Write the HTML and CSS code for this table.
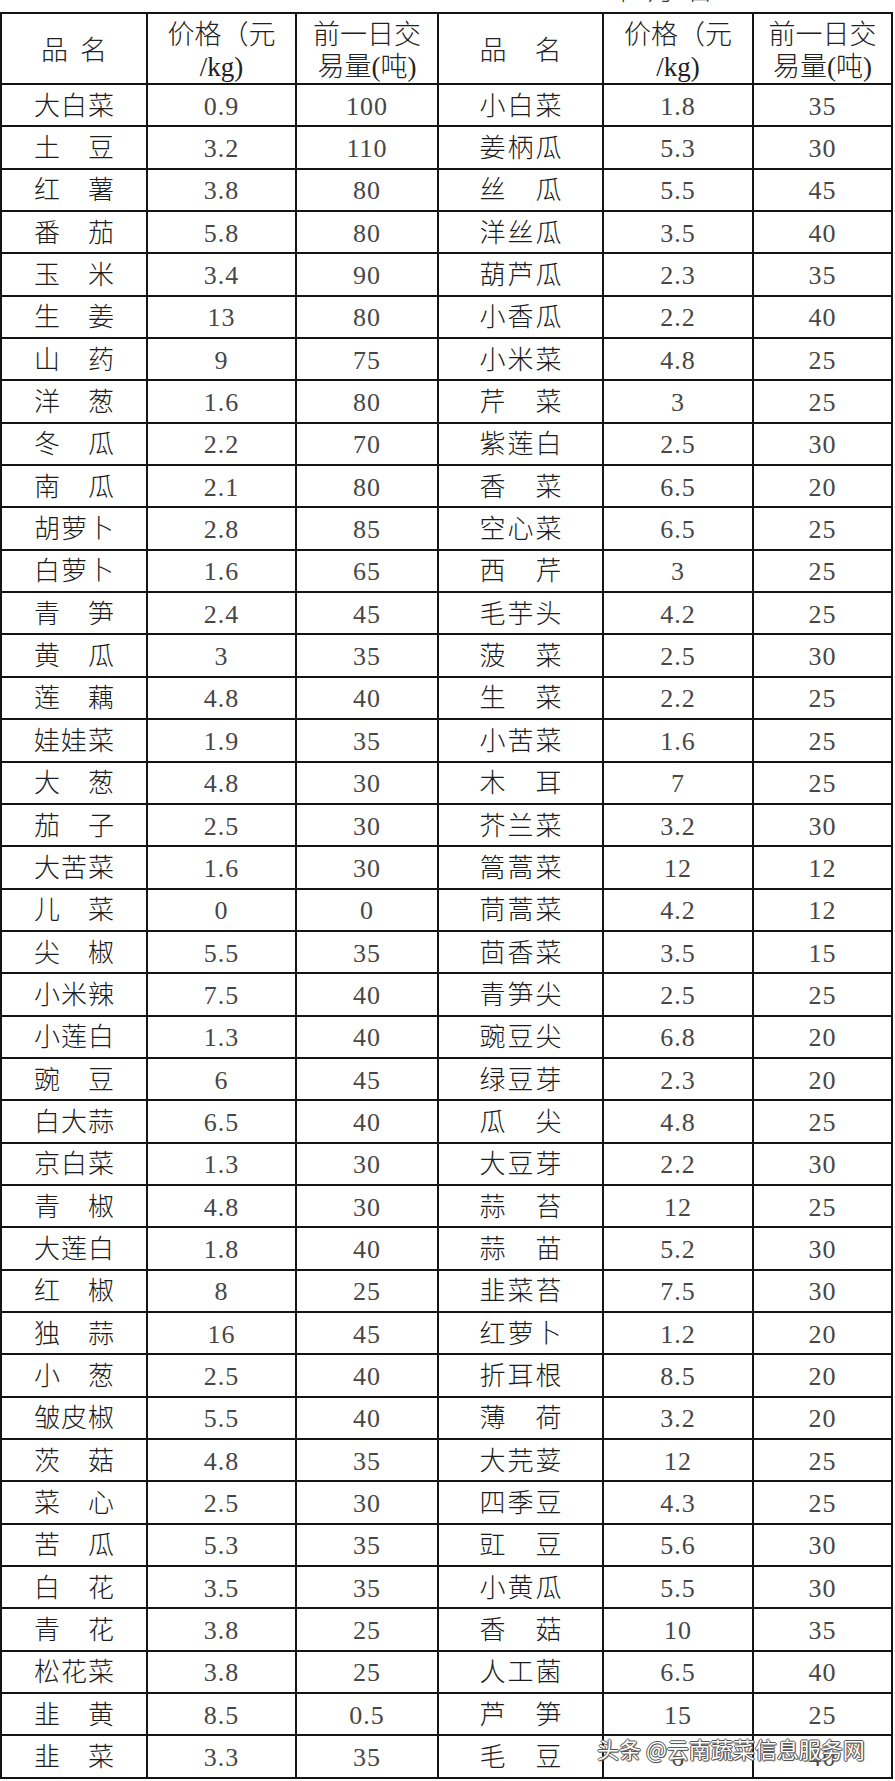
FILE: index.html
```html
<!DOCTYPE html>
<html lang="zh-CN">
<head>
<meta charset="utf-8">
<title>蔬菜价格表</title>
<link rel="stylesheet" href="styles.css">
</head>
<body>
<div class="page">
  <div class="date-strip"><span class="date">2023年6月5日</span></div>
  <div class="sheet">
    <div class="c h"><span class="nm hl"><i>品</i><i>名</i></span></div>
    <div class="c h">价格（元<br>/kg)</div>
    <div class="c h">前一日交<br>易量(吨)</div>
    <div class="c h"><span class="nm hr"><i>品</i><i>名</i></span></div>
    <div class="c h">价格（元<br>/kg)</div>
    <div class="c h">前一日交<br>易量(吨)</div>

    <div class="c"><span class="nm"><i>大</i><i>白</i><i>菜</i></span></div><div class="c n">0.9</div><div class="c n">100</div>
    <div class="c"><span class="nm r"><i>小</i><i>白</i><i>菜</i></span></div><div class="c n">1.8</div><div class="c n">35</div>

    <div class="c"><span class="nm"><i>土</i><i>豆</i></span></div><div class="c n">3.2</div><div class="c n">110</div>
    <div class="c"><span class="nm r"><i>姜</i><i>柄</i><i>瓜</i></span></div><div class="c n">5.3</div><div class="c n">30</div>

    <div class="c"><span class="nm"><i>红</i><i>薯</i></span></div><div class="c n">3.8</div><div class="c n">80</div>
    <div class="c"><span class="nm r"><i>丝</i><i>瓜</i></span></div><div class="c n">5.5</div><div class="c n">45</div>

    <div class="c"><span class="nm"><i>番</i><i>茄</i></span></div><div class="c n">5.8</div><div class="c n">80</div>
    <div class="c"><span class="nm r"><i>洋</i><i>丝</i><i>瓜</i></span></div><div class="c n">3.5</div><div class="c n">40</div>

    <div class="c"><span class="nm"><i>玉</i><i>米</i></span></div><div class="c n">3.4</div><div class="c n">90</div>
    <div class="c"><span class="nm r"><i>葫</i><i>芦</i><i>瓜</i></span></div><div class="c n">2.3</div><div class="c n">35</div>

    <div class="c"><span class="nm"><i>生</i><i>姜</i></span></div><div class="c n">13</div><div class="c n">80</div>
    <div class="c"><span class="nm r"><i>小</i><i>香</i><i>瓜</i></span></div><div class="c n">2.2</div><div class="c n">40</div>

    <div class="c"><span class="nm"><i>山</i><i>药</i></span></div><div class="c n">9</div><div class="c n">75</div>
    <div class="c"><span class="nm r"><i>小</i><i>米</i><i>菜</i></span></div><div class="c n">4.8</div><div class="c n">25</div>

    <div class="c"><span class="nm"><i>洋</i><i>葱</i></span></div><div class="c n">1.6</div><div class="c n">80</div>
    <div class="c"><span class="nm r"><i>芹</i><i>菜</i></span></div><div class="c n">3</div><div class="c n">25</div>

    <div class="c"><span class="nm"><i>冬</i><i>瓜</i></span></div><div class="c n">2.2</div><div class="c n">70</div>
    <div class="c"><span class="nm r"><i>紫</i><i>莲</i><i>白</i></span></div><div class="c n">2.5</div><div class="c n">30</div>

    <div class="c"><span class="nm"><i>南</i><i>瓜</i></span></div><div class="c n">2.1</div><div class="c n">80</div>
    <div class="c"><span class="nm r"><i>香</i><i>菜</i></span></div><div class="c n">6.5</div><div class="c n">20</div>

    <div class="c"><span class="nm"><i>胡</i><i>萝</i><i>卜</i></span></div><div class="c n">2.8</div><div class="c n">85</div>
    <div class="c"><span class="nm r"><i>空</i><i>心</i><i>菜</i></span></div><div class="c n">6.5</div><div class="c n">25</div>

    <div class="c"><span class="nm"><i>白</i><i>萝</i><i>卜</i></span></div><div class="c n">1.6</div><div class="c n">65</div>
    <div class="c"><span class="nm r"><i>西</i><i>芹</i></span></div><div class="c n">3</div><div class="c n">25</div>

    <div class="c"><span class="nm"><i>青</i><i>笋</i></span></div><div class="c n">2.4</div><div class="c n">45</div>
    <div class="c"><span class="nm r"><i>毛</i><i>芋</i><i>头</i></span></div><div class="c n">4.2</div><div class="c n">25</div>

    <div class="c"><span class="nm"><i>黄</i><i>瓜</i></span></div><div class="c n">3</div><div class="c n">35</div>
    <div class="c"><span class="nm r"><i>菠</i><i>菜</i></span></div><div class="c n">2.5</div><div class="c n">30</div>

    <div class="c"><span class="nm"><i>莲</i><i>藕</i></span></div><div class="c n">4.8</div><div class="c n">40</div>
    <div class="c"><span class="nm r"><i>生</i><i>菜</i></span></div><div class="c n">2.2</div><div class="c n">25</div>

    <div class="c"><span class="nm"><i>娃</i><i>娃</i><i>菜</i></span></div><div class="c n">1.9</div><div class="c n">35</div>
    <div class="c"><span class="nm r"><i>小</i><i>苦</i><i>菜</i></span></div><div class="c n">1.6</div><div class="c n">25</div>

    <div class="c"><span class="nm"><i>大</i><i>葱</i></span></div><div class="c n">4.8</div><div class="c n">30</div>
    <div class="c"><span class="nm r"><i>木</i><i>耳</i></span></div><div class="c n">7</div><div class="c n">25</div>

    <div class="c"><span class="nm"><i>茄</i><i>子</i></span></div><div class="c n">2.5</div><div class="c n">30</div>
    <div class="c"><span class="nm r"><i>芥</i><i>兰</i><i>菜</i></span></div><div class="c n">3.2</div><div class="c n">30</div>

    <div class="c"><span class="nm"><i>大</i><i>苦</i><i>菜</i></span></div><div class="c n">1.6</div><div class="c n">30</div>
    <div class="c"><span class="nm r"><i>篙</i><i>蒿</i><i>菜</i></span></div><div class="c n">12</div><div class="c n">12</div>

    <div class="c"><span class="nm"><i>儿</i><i>菜</i></span></div><div class="c n">0</div><div class="c n">0</div>
    <div class="c"><span class="nm r"><i>茼</i><i>蒿</i><i>菜</i></span></div><div class="c n">4.2</div><div class="c n">12</div>

    <div class="c"><span class="nm"><i>尖</i><i>椒</i></span></div><div class="c n">5.5</div><div class="c n">35</div>
    <div class="c"><span class="nm r"><i>茴</i><i>香</i><i>菜</i></span></div><div class="c n">3.5</div><div class="c n">15</div>

    <div class="c"><span class="nm"><i>小</i><i>米</i><i>辣</i></span></div><div class="c n">7.5</div><div class="c n">40</div>
    <div class="c"><span class="nm r"><i>青</i><i>笋</i><i>尖</i></span></div><div class="c n">2.5</div><div class="c n">25</div>

    <div class="c"><span class="nm"><i>小</i><i>莲</i><i>白</i></span></div><div class="c n">1.3</div><div class="c n">40</div>
    <div class="c"><span class="nm r"><i>豌</i><i>豆</i><i>尖</i></span></div><div class="c n">6.8</div><div class="c n">20</div>

    <div class="c"><span class="nm"><i>豌</i><i>豆</i></span></div><div class="c n">6</div><div class="c n">45</div>
    <div class="c"><span class="nm r"><i>绿</i><i>豆</i><i>芽</i></span></div><div class="c n">2.3</div><div class="c n">20</div>

    <div class="c"><span class="nm"><i>白</i><i>大</i><i>蒜</i></span></div><div class="c n">6.5</div><div class="c n">40</div>
    <div class="c"><span class="nm r"><i>瓜</i><i>尖</i></span></div><div class="c n">4.8</div><div class="c n">25</div>

    <div class="c"><span class="nm"><i>京</i><i>白</i><i>菜</i></span></div><div class="c n">1.3</div><div class="c n">30</div>
    <div class="c"><span class="nm r"><i>大</i><i>豆</i><i>芽</i></span></div><div class="c n">2.2</div><div class="c n">30</div>

    <div class="c"><span class="nm"><i>青</i><i>椒</i></span></div><div class="c n">4.8</div><div class="c n">30</div>
    <div class="c"><span class="nm r"><i>蒜</i><i>苔</i></span></div><div class="c n">12</div><div class="c n">25</div>

    <div class="c"><span class="nm"><i>大</i><i>莲</i><i>白</i></span></div><div class="c n">1.8</div><div class="c n">40</div>
    <div class="c"><span class="nm r"><i>蒜</i><i>苗</i></span></div><div class="c n">5.2</div><div class="c n">30</div>

    <div class="c"><span class="nm"><i>红</i><i>椒</i></span></div><div class="c n">8</div><div class="c n">25</div>
    <div class="c"><span class="nm r"><i>韭</i><i>菜</i><i>苔</i></span></div><div class="c n">7.5</div><div class="c n">30</div>

    <div class="c"><span class="nm"><i>独</i><i>蒜</i></span></div><div class="c n">16</div><div class="c n">45</div>
    <div class="c"><span class="nm r"><i>红</i><i>萝</i><i>卜</i></span></div><div class="c n">1.2</div><div class="c n">20</div>

    <div class="c"><span class="nm"><i>小</i><i>葱</i></span></div><div class="c n">2.5</div><div class="c n">40</div>
    <div class="c"><span class="nm r"><i>折</i><i>耳</i><i>根</i></span></div><div class="c n">8.5</div><div class="c n">20</div>

    <div class="c"><span class="nm"><i>皱</i><i>皮</i><i>椒</i></span></div><div class="c n">5.5</div><div class="c n">40</div>
    <div class="c"><span class="nm r"><i>薄</i><i>荷</i></span></div><div class="c n">3.2</div><div class="c n">20</div>

    <div class="c"><span class="nm"><i>茨</i><i>菇</i></span></div><div class="c n">4.8</div><div class="c n">35</div>
    <div class="c"><span class="nm r"><i>大</i><i>芫</i><i>荽</i></span></div><div class="c n">12</div><div class="c n">25</div>

    <div class="c"><span class="nm"><i>菜</i><i>心</i></span></div><div class="c n">2.5</div><div class="c n">30</div>
    <div class="c"><span class="nm r"><i>四</i><i>季</i><i>豆</i></span></div><div class="c n">4.3</div><div class="c n">25</div>

    <div class="c"><span class="nm"><i>苦</i><i>瓜</i></span></div><div class="c n">5.3</div><div class="c n">35</div>
    <div class="c"><span class="nm r"><i>豇</i><i>豆</i></span></div><div class="c n">5.6</div><div class="c n">30</div>

    <div class="c"><span class="nm"><i>白</i><i>花</i></span></div><div class="c n">3.5</div><div class="c n">35</div>
    <div class="c"><span class="nm r"><i>小</i><i>黄</i><i>瓜</i></span></div><div class="c n">5.5</div><div class="c n">30</div>

    <div class="c"><span class="nm"><i>青</i><i>花</i></span></div><div class="c n">3.8</div><div class="c n">25</div>
    <div class="c"><span class="nm r"><i>香</i><i>菇</i></span></div><div class="c n">10</div><div class="c n">35</div>

    <div class="c"><span class="nm"><i>松</i><i>花</i><i>菜</i></span></div><div class="c n">3.8</div><div class="c n">25</div>
    <div class="c"><span class="nm r"><i>人</i><i>工</i><i>菌</i></span></div><div class="c n">6.5</div><div class="c n">40</div>

    <div class="c"><span class="nm"><i>韭</i><i>黄</i></span></div><div class="c n">8.5</div><div class="c n">0.5</div>
    <div class="c"><span class="nm r"><i>芦</i><i>笋</i></span></div><div class="c n">15</div><div class="c n">25</div>

    <div class="c"><span class="nm"><i>韭</i><i>菜</i></span></div><div class="c n">3.3</div><div class="c n">35</div>
    <div class="c"><span class="nm r"><i>毛</i><i>豆</i></span></div><div class="c n">6</div><div class="c n">40</div>
  </div>
  <div class="watermark">头条 @云南蔬菜信息服务网</div>
</div>
</body>
</html>
```

FILE: styles.css
```css
html, body {
  margin: 0;
  padding: 0;
  background: #ffffff;
}

.page {
  position: relative;
  width: 895px;
  font-family: "Liberation Serif", "Noto Sans CJK SC", serif;
  color: #1c1c1c;
}

.date-strip {
  height: 12px;
  overflow: hidden;
  padding-left: 557px;
}

.date {
  display: block;
  margin-top: -21px;
  font-size: 26px;
  line-height: 26px;
  font-weight: 300;
  color: #333;
}

.sheet {
  display: grid;
  grid-template-columns: 146px 149px 142px 165px 150px 139px;
  grid-template-rows: 71px;
  grid-auto-rows: 42.35px;
  width: 893px;
  box-sizing: border-box;
  border-left: 2px solid #141414;
  border-top: 2px solid #141414;
}

.c {
  box-sizing: border-box;
  border-right: 2px solid #141414;
  border-bottom: 2px solid #141414;
  display: flex;
  align-items: center;
  justify-content: center;
  text-align: center;
  padding-top: 3px;
  font-size: 26px;
  line-height: 30px;
  font-weight: 300;
  color: #1c1c1c;
}

.c.h {
  font-size: 27px;
  line-height: 32px;
  padding-top: 4px;
  color: #222;
}

.c.n {
  color: #474747;
  letter-spacing: 1px;
  font-weight: 400;
}

.nm {
  display: flex;
  justify-content: space-between;
  width: 80px;
}

.nm.r {
  width: 82px;
}

.nm.hl {
  width: 66px;
}

.nm.hr {
  width: 82px;
}

.nm i {
  font-style: normal;
}

.watermark {
  position: absolute;
  left: 597px;
  top: 1733px;
  font-family: "Noto Sans CJK SC", sans-serif;
  font-size: 22px;
  line-height: 30px;
  font-weight: 400;
  color: #ffffff;
  text-shadow: 1px 0 0 #555, -1px 0 0 #555, 0 1px 0 #555, 0 -1px 0 #555, 1px 1px 1px #666;
}
```
